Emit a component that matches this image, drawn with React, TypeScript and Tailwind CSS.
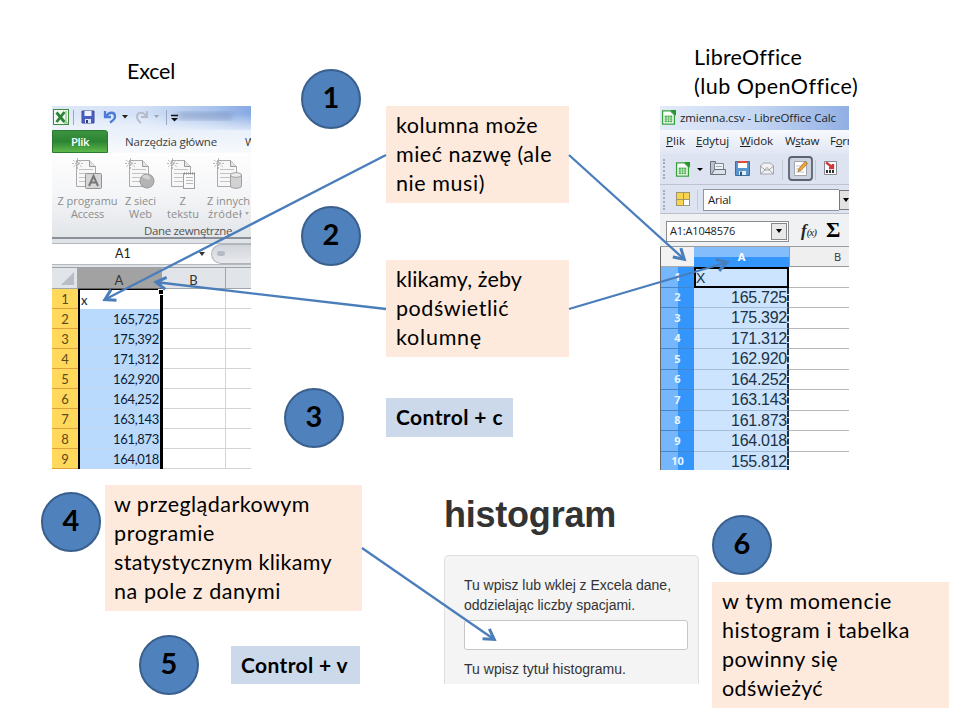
import { useLayoutEffect, useRef, type ReactNode } from "react";

const lato = "font-['Lato','Liberation_Sans',sans-serif]";
const segoe = "font-['Open_Sans','Noto_Sans',sans-serif]";
const arial = "font-['Liberation_Sans',sans-serif]";

/* A single line of text, tracked so that it occupies exactly `w` pixels. */
function Line({ w, className = "", children }: { w: number; className?: string; children: ReactNode }) {
  const ref = useRef<HTMLSpanElement>(null);
  useLayoutEffect(() => {
    const el = ref.current;
    if (!el) return;
    el.style.letterSpacing = "0px";
    const natural = el.getBoundingClientRect().width;
    const count = (el.textContent || "").length;
    if (count > 0) el.style.letterSpacing = `${(w - natural) / count}px`;
  }, [w]);
  return (
    <span className="block w-max">
      <span ref={ref} className={`inline-block whitespace-nowrap ${className}`}>{children}</span>
    </span>
  );
}

function Step({ n, className = "" }: { n: number; className?: string }) {
  return (
    <div className={`flex size-[60px] shrink-0 items-center justify-center rounded-full border-[2.500px] border-[#3a5f8d] bg-[#4f81bd] pb-[5px] text-[29px] leading-none font-bold text-black ${className}`}>
      {n}
    </div>
  );
}

function Note({ lines, className = "" }: { lines: [string, number][]; className?: string }) {
  return (
    <div className={`shrink-0 bg-[#fdeadd] pt-[5px] text-[21.500px] leading-[29px] text-black ${className}`}>
      {lines.map(([t, w]) => (
        <Line key={t} w={w}>{t}</Line>
      ))}
    </div>
  );
}

function Shortcut({ text, w, className = "" }: { text: string; w: number; className?: string }) {
  return (
    <div className={`flex shrink-0 items-center bg-[#cbd9eb] pb-[2px] pl-[10px] text-[21px] leading-[29px] font-bold text-black ${className}`}>
      <Line w={w}>{text}</Line>
    </div>
  );
}

function DocIcon({ kind }: { kind: "access" | "web" | "text" | "other" }) {
  return (
    <svg width="32" height="33" viewBox="0 0 32 33" fill="none" className="shrink-0">
      <path d="M4.500 3.500h13l6 6v20h-19z" fill="#f7f7f7" stroke="#aaa" />
      <path d="M17.500 3.500v6h6" fill="#e4e4e4" stroke="#999" />
      <path d="M7 12.500h14M7 16.500h14M7 20.500h14M7 24.500h14" stroke="#c2c2c2" />
      <path d="M1 3l9 7M10 3l-9 7M5.500 1v11M0 6.500h11" stroke="#b9b9b9" strokeDasharray="2 1" />
      {kind === "access" && (
        <g>
          <rect x="13.500" y="16.500" width="16" height="15" rx="1" fill="#d6d6d6" stroke="#929292" />
          <path d="M17 29l4.500-10 4.500 10M18.500 25.500h6" stroke="#777" strokeWidth="2" />
        </g>
      )}
      {kind === "web" && (
        <g>
          <circle cx="22" cy="24" r="7" fill="#b4b4b4" stroke="#989898" />
          <path d="M17 20c3-4 8-2 8 1s-5 1-8-1z" fill="#d4d4d4" />
        </g>
      )}
      {kind === "text" && (
        <g>
          <rect x="16.500" y="16.500" width="11" height="15" fill="#fafafa" stroke="#a0a0a0" />
          <path d="M17 16.500h11" stroke="#888" strokeWidth="2" strokeDasharray="1 1" />
          <path d="M19 20.500h7M19 23.500h7M19 26.500h7" stroke="#bbb" />
        </g>
      )}
      {kind === "other" && (
        <g>
          <path d="M17.500 18v11c0 3 11 3 11 0V18" fill="#d2d2d2" stroke="#a0a0a0" />
          <ellipse cx="23" cy="18" rx="5.500" ry="2.300" fill="#ececec" stroke="#a0a0a0" />
        </g>
      )}
    </svg>
  );
}

const excelRows: string[] = ["x", "165,725", "175,392", "171,312", "162,920", "164,252", "163,143", "161,873", "164,018"];

function RibbonItem({ kind, a, b, wa, wb, className }: { kind: "access" | "web" | "text" | "other"; a: string; b: string; wa: number; wb: number; className: string }) {
  return (
    <div className={`flex shrink-0 flex-col items-center text-[11px] leading-[13px] text-[#8d8d8d] ${className}`}>
      <DocIcon kind={kind} />
      <div className="mt-[4px] flex flex-col items-center">
        <Line w={wa}>{a}</Line>
        <div className="flex items-center">
          <Line w={wb}>{b}</Line>
          {kind === "other" && <span className="ml-[3px] border-x-[2.5px] border-t-[3px] border-x-transparent border-t-[#aaa]" />}
        </div>
      </div>
    </div>
  );
}

function Excel() {
  return (
    <div className="flex h-[364px] w-[199px] flex-col overflow-hidden bg-white">
      {/* Quick access toolbar */}
      <div className="flex h-[24px] shrink-0 items-center bg-[linear-gradient(90deg,#dfe8f7_0%,#d3e1f7_45%,#a9c3ec_80%,#86a9e4_100%)]">
        <svg width="199" height="24" fill="none">
          <defs>
            <linearGradient id="fade" x1="0" y1="0" x2="0" y2="1">
              <stop offset="0" stopColor="#fff" stopOpacity="0" />
              <stop offset="1" stopColor="#f3f7fd" stopOpacity=".75" />
            </linearGradient>
            <filter id="soft"><feGaussianBlur stdDeviation="3" /></filter>
          </defs>
          <rect y="8" width="199" height="16" fill="url(#fade)" />
          <rect x="126" y="6" width="54" height="8" fill="#6d86ad" opacity=".45" filter="url(#soft)" />
          <rect x="1.500" y="3.500" width="15" height="15" fill="#f4faf2" stroke="#3d8c3c" />
          <path d="M4.500 6.500l8 9.500M12.500 6l-8 10" stroke="#2a8436" strokeWidth="2.800" />
          <path d="M14 5v12M12 17h4" stroke="#7db574" />
          <path d="M21.500 4v15M114.500 4v15" stroke="#9ba9c0" />
          <path d="M30 5h12v12H30z" fill="#4b5fc0" stroke="#3e4c9c" />
          <path d="M32.500 5h7v5h-7z" fill="#eff4ff" />
          <path d="M33 13h6v4h-6z" fill="#dfe5f5" /><path d="M34 14h2v3h-2z" fill="#303c82" />
          <path d="M53 5v6h6M54 10.500c3-5 9-5 9 0 0 3-2 4-5 6" stroke="#4c7cd6" strokeWidth="2.300" />
          <path d="M70 9h6l-3 3.500z" fill="#222" />
          <path d="M95 5v6h-6M94 10c-3-5-9-4-9 1 0 3 2 4 4 6" stroke="#b4bac6" strokeWidth="1.800" />
          <path d="M102 9h5l-2.500 3z" fill="#9ca3b0" />
          <path d="M119 9.500h7" stroke="#111" strokeWidth="1.500" /><path d="M119 12h7l-3.500 3.500z" fill="#111" />
        </svg>
      </div>
      {/* Tabs */}
      <div className={`flex h-[23px] shrink-0 items-center bg-[linear-gradient(180deg,#e9f0fa,#f8fafc)] text-[11.500px] text-[#3d3d3d] ${segoe}`}>
        <div className="flex h-full w-[56px] shrink-0 items-center justify-center rounded-tr-[3px] border border-[#2b7a31] bg-[linear-gradient(180deg,#3d9440_0%,#2b8433_50%,#5fb84a_100%)] font-semibold text-white">
          <Line w={18}>Plik</Line>
        </div>
        <div className="ml-[17px] shrink-0"><Line w={92}>Narzędzia główne</Line></div>
        <div className="ml-[28px] shrink-0">W</div>
      </div>
      {/* Ribbon group */}
      <div className={`flex h-[86px] shrink-0 flex-col border-b-2 border-[#8a8f98] bg-[linear-gradient(180deg,#fefefe_0%,#f4f5f7_50%,#e2e5e9_100%)] ${segoe}`}>
        <div className="flex pt-[4px]">
          <RibbonItem kind="access" a="Z programu" b="Access" wa={60} wb={33} className="ml-[5px] w-[61px]" />
          <RibbonItem kind="web" a="Z sieci" b="Web" wa={31} wb={23} className="ml-[5px] w-[35px]" />
          <RibbonItem kind="text" a="Z" b="tekstu" wa={7} wb={32} className="ml-[8px] w-[34px]" />
          <RibbonItem kind="other" a="Z innych" b="źródeł" wa={43} wb={34} className="ml-[6px] w-[45px]" />
        </div>
        <div className="mt-[3px] ml-[92px] text-[11.500px] leading-[16px] text-[#555]"><Line w={88}>Dane zewnętrzne</Line></div>
      </div>
      {/* Name box */}
      <div className="flex h-[29px] shrink-0 items-center border-b border-[#9ea3aa] bg-[#dfe2e6] pt-px">
        <div className={`flex h-[22px] w-full items-center border-y border-[#b6babf] bg-white text-[12.500px] text-[#222] ${lato}`}>
          <div className="w-[146px] pt-[2px] pl-[63px]"><Line w={16}>A1</Line></div>
          <span className="ml-[1px] border-x-[3.500px] border-t-4 border-x-transparent border-t-[#333]" />
          <div className="ml-[6px] flex h-[20px] flex-1 items-center rounded-l-full border border-r-0 border-[#aeb3ba] bg-[linear-gradient(180deg,#d2d5da,#e8eaed)] pl-[5px]">
            <span className="h-[5px] w-[8px] rounded-full bg-[#b4bbc5]" />
          </div>
        </div>
      </div>
      {/* Column headings */}
      <div className={`flex h-[21px] shrink-0 bg-[#e1e4e9] text-[13px] leading-[24px] text-[#333] ${lato}`}>
        <div className="flex w-[26px] items-end justify-end border-r border-b border-[#9fa5ad] p-[3px]">
          <svg width="13" height="13"><path d="M13 0v13H0z" fill="#b9bec6" /></svg>
        </div>
        <div className="w-[84px] border-b border-[#666] bg-[#a2a2a2] pr-[2px] text-center">A</div>
        <div className="w-[64px] border-r border-b border-[#9fa5ad] text-center">B</div>
        <div className="flex-1 border-b border-[#9fa5ad]" />
      </div>
      {/* Cells */}
      <div className={`flex ${lato}`}>
        <div className="w-[26px] shrink-0 bg-[#ffd85c] text-[13px] text-[#5a4a18]">
          {excelRows.map((_, i) => (
            <div key={i} className="flex h-[20px] items-center justify-center border-b border-[#dfa23a] pt-[2px]">{i + 1}</div>
          ))}
        </div>
        <div className="relative w-[85px] shrink-0 border-t-[1.500px] border-r-[3px] border-l-2 border-black bg-white text-[13px] text-[#0d1a33]">
          {excelRows.map((v, i) =>
            i === 0 ? (
              <div key={v} className="h-[19px] pl-[1px] leading-[20px]">{v}</div>
            ) : (
              <div key={v} className="flex h-[20px] items-center justify-end border-b border-[#bfd6f0] bg-[#b9dafc] pt-[2px] pr-px">
                <Line w={46}>{v}</Line>
              </div>
            ),
          )}
          <span className="absolute -top-[1px] -right-[4px] size-[6px] border border-white bg-black" />
        </div>
        <div className="w-[63px] shrink-0 border-r border-[#d3d3d3]">
          {excelRows.map((v) => <div key={v} className="h-[20px] border-b border-[#d3d3d3]" />)}
        </div>
        <div className="flex-1">
          {excelRows.map((v) => <div key={v} className="h-[20px] border-b border-[#d3d3d3]" />)}
        </div>
      </div>
    </div>
  );
}

function CalcDoc({ size }: { size: number }) {
  return (
    <svg width={size} height={size} viewBox="0 0 16 16" className="shrink-0">
      <path d="M1.700 1h8.600l4 4v10H1.700z" fill="#fff" stroke="#36a13c" strokeWidth="1.400" />
      <path d="M10 0h6v6z" fill="#27932e" />
      <path d="M4 6h8v7H4z" fill="#3da842" />
      <path d="M4 8.500h8M4 10.800h8M6.700 6v7M9.400 6v7" stroke="#dff2df" strokeWidth=".8" />
    </svg>
  );
}

function Grip() {
  return <span className="ml-[3px] h-[20px] shrink-0 border-l-2 border-dotted border-[#a4adbb]" />;
}

const calcRows: string[] = ["X", "165.725", "175.392", "171.312", "162.920", "164.252", "163.143", "161.873", "164.018", "155.812"];

function Calc() {
  return (
    <div className="flex h-[364px] w-[189px] flex-col overflow-hidden bg-white">
      <div className={`flex h-[24px] shrink-0 items-center bg-[linear-gradient(90deg,#e3ebf8_0%,#c6d7f3_50%,#91afe4_100%)] pb-px pl-[1px] text-[11.500px] text-[#1d1d1d] ${segoe}`}>
        <CalcDoc size={15} />
        <div className="ml-[4px] shrink-0"><Line w={156}>zmienna.csv - LibreOffice Calc</Line></div>
      </div>
      <div className={`flex h-[24px] shrink-0 items-center bg-[linear-gradient(180deg,#f7f9fd,#e1e6f3)] pb-[2px] pl-[6px] text-[11.500px] text-[#1d1d1d] ${segoe}`}>
        <div className="w-[30px] shrink-0"><Line w={19}><u>P</u>lik</Line></div>
        <div className="w-[44px] shrink-0"><Line w={33}><u>E</u>dytuj</Line></div>
        <div className="w-[45px] shrink-0"><Line w={33}><u>W</u>idok</Line></div>
        <div className="w-[45px] shrink-0"><Line w={34}>W<u>s</u>taw</Line></div>
        <div className="shrink-0"><Line w={37}>F<u>o</u>rmat</Line></div>
      </div>
      {/* Standard toolbar */}
      <div className="flex h-[31px] shrink-0 items-center border-b border-[#bcc4d2] bg-[#dde3f0]">
        <Grip />
        <span className="ml-[10px] flex"><CalcDoc size={15} /></span>
        <span className="ml-[7px] shrink-0 border-x-[3px] border-t-[3px] border-x-transparent border-t-black" />
        <svg width="142" height="31" fill="none" className="shrink-0">
          <path d="M7.500 7.500h5v13h-5z" fill="#bcc3cb" stroke="#65707e" />
          <path d="M11.500 9.500h9v7h-9z" fill="#eef1f5" stroke="#7d8794" /><path d="M13 12.500h6" stroke="#a3abb5" /><path d="M8.500 20.500l3-5h11v5z" fill="#dde1e7" stroke="#65707e" />
          <path d="M32.500 7.500h14v14h-14z" fill="#5795cf" stroke="#386e9f" />
          <path d="M35 8h9v6h-9z" fill="#fff" /><path d="M34 8h11" stroke="#de4b36" strokeWidth="2" />
          <path d="M36 17h7v4h-7z" fill="#e5edf5" /><path d="M37 17.500h2v4h-2z" fill="#30567b" />
          <path d="M57.500 12l3-3h7l3 3v8h-13z" fill="#f1f1f1" stroke="#a2a6ac" />
          <path d="M57.500 20l4.500-4h4l4.500 4M57.500 12l4.500 4c1-3 3-3 4 0l4.500-4" stroke="#a2a6ac" />
          <path d="M79.500 6v20" stroke="#c3cad6" />
          <rect x="86" y="3" width="23" height="23" rx="3" fill="#cbd3e1" stroke="#5d6470" strokeWidth="1.800" />
          <path d="M91.500 7.500h12v14h-12z" fill="#fff" stroke="#a2a6ac" />
          <path d="M93 12h6M93 15h4M93 18h8" stroke="#c2c6cc" />
          <path d="M96 14.500l6-7 2.500 2-6.500 7-3 1z" fill="#f0a534" stroke="#986123" strokeWidth=".7" />
          <path d="M112.500 6v20" stroke="#c3cad6" />
          <path d="M121.500 7.500h12v13h-12z" fill="#fff" stroke="#85898f" />
          <path d="M123 8.500l7 5M130 10v4h-4" stroke="#ce3838" strokeWidth="2.300" />
          <path d="M123 17.500h9" stroke="#333" strokeWidth="3" strokeDasharray="2 1" />
        </svg>
      </div>
      {/* Formatting toolbar */}
      <div className="flex h-[29px] shrink-0 items-center border-b border-[#bcbfc5] bg-[#dde3f0] pt-px">
        <Grip />
        <svg width="35" height="24" fill="none" className="ml-px shrink-0">
          <rect x="10.500" y="4.500" width="13" height="13" fill="#fff" stroke="#9e966d" />
          <path d="M11 5h6v6h-6zM18 5h5v6h-5zM11 12h6v5h-6z" fill="#f8d34e" /><path d="M17.500 5v13M11 11.500h13" stroke="#9e966d" />
          <path d="M31.500 2v20" stroke="#c3cad6" />
        </svg>
        <div className={`ml-[2px] flex h-[22px] flex-1 items-center border border-r-0 border-[#8f96a3] bg-white pl-[4px] text-[11.500px] text-[#222] ${segoe}`}>
          <Line w={23}>Arial</Line>
        </div>
        <span className="flex h-[20px] w-[10px] shrink-0 items-center justify-end border border-r-0 border-[#777] bg-[#e3e3e3]">
          <span className="border-x-[3.500px] border-t-4 border-x-transparent border-t-black" />
        </span>
      </div>
      {/* Formula bar */}
      <div className={`flex h-[33px] shrink-0 items-center border-b border-[#9b9b9b] bg-[#f0f1f3] pt-[2px] pl-[6px] text-[11px] text-[#222] ${segoe}`}>
        <div className="flex h-[21px] w-[123px] shrink-0 items-center justify-between border border-[#8c8c8c] bg-white pr-px pl-[3px]">
          <Line w={65}>A1:A1048576</Line>
          <span className="flex h-[17px] w-[16px] items-center justify-center border border-[#888] bg-[#e9e9e9]">
            <span className="border-x-[3.500px] border-t-[4px] border-x-transparent border-t-black" />
          </span>
        </div>
        <div className="ml-[12px] flex w-[17px] items-baseline pb-[2px] font-['Liberation_Serif',serif] italic">
          <span className="text-[17px] leading-none font-bold">f</span>
          <span className="text-[11px] leading-none tracking-[-1px]">(x)</span>
        </div>
        <div className="ml-[8px] pb-[2px] font-['Liberation_Serif',serif] text-[22px] leading-none font-bold text-black">Σ</div>
      </div>
      {/* Column headings */}
      <div className={`flex h-[20px] shrink-0 border-l border-[#666] text-[11px] leading-[20px] text-[#333] ${segoe}`}>
        <div className="w-[33px] border-b border-[#aaa] bg-[#f2f2f2]" />
        <div className="w-[95px] bg-[linear-gradient(180deg,#83bdfc_50%,#3496fb_50%)] text-center font-bold text-white">A</div>
        <div className="flex-1 border-b border-l border-[#999] bg-[#efefef] pl-[44px]">B</div>
      </div>
      <div className="flex border-l border-[#666]">
        <div className={`w-[33px] shrink-0 bg-[linear-gradient(90deg,#76b6fb_50%,#3496fb_50%)] text-[11px] font-bold text-[#e9f5ff] ${segoe}`}>
          {calcRows.map((v, i) => (
            <div key={v} className="flex h-[20.500px] items-center justify-center border-b border-[#4586ca]">{i + 1}</div>
          ))}
        </div>
        <div className={`w-[95px] shrink-0 bg-[#cce4fd] text-[16px] text-[#203246] ${arial}`}>
          {calcRows.map((v, i) =>
            i === 0 ? (
              <div key={v} className="flex h-[20.500px] items-center border-2 border-black pt-[2px] text-[14px]">{v}</div>
            ) : (
              <div key={v} className="flex h-[20.500px] items-center justify-end border-r-2 border-b border-r-[#233044] border-b-[#a5bdd6] pt-px [border-right-style:dashed]">
                <Line w={56}>{v}</Line>
              </div>
            ),
          )}
        </div>
        <div className="flex-1">
          {calcRows.map((v) => <div key={v} className="h-[20.500px] border-b border-[#b7b7b7]" />)}
        </div>
      </div>
    </div>
  );
}

const arrows: [number, number, number, number][] = [
  [386, 155, 104, 300],
  [386, 309, 155, 282],
  [569, 155, 685, 260],
  [569, 309, 728, 262],
  [362, 548, 495, 640],
];

function Arrows() {
  return (
    <svg width="960" height="720" className="pointer-events-none absolute inset-0" fill="none" stroke="#4a7ebb" strokeWidth="2.300">
      {arrows.map(([x1, y1, x2, y2]) => {
        const angle = (Math.atan2(y2 - y1, x2 - x1) * 180) / Math.PI;
        return (
          <g key={`${x1}-${y1}-${x2}`}>
            <path d={`M${x1} ${y1}L${x2} ${y2}`} />
            <path d="M-11 -6L-1 0L-11 6" strokeWidth="3" transform={`translate(${x2} ${y2}) rotate(${angle})`} />
          </g>
        );
      })}
    </svg>
  );
}

export default function App() {
  return (
    <main className={`relative flex h-[720px] w-[960px] flex-col overflow-hidden bg-white ${lato}`}>
      <section className="flex h-[470px] shrink-0 items-start">
        <div className="ml-[52px] flex w-[199px] shrink-0 flex-col">
          <div className="flex h-[106px] pt-[57px] pl-[75px] text-[21.500px] leading-[29px]"><Line w={48}>Excel</Line></div>
          <Excel />
        </div>
        <div className="ml-[33px] flex w-[78px] shrink-0 flex-col pt-[69px]">
          <Step n={1} className="ml-[17px]" />
          <Step n={2} className="mt-[77px] ml-[17px]" />
          <Step n={3} className="mt-[122px]" />
        </div>
        <div className="ml-[24px] flex w-[183px] shrink-0 flex-col pt-[106px]">
          <Note className="h-[97px] pl-[10px]" lines={[["kolumna może", 142], ["mieć nazwę (ale", 156], ["nie musi)", 89]]} />
          <Note className="mt-[57px] h-[97px] pl-[10px]" lines={[["klikamy, żeby", 126], ["podświetlić", 113], ["kolumnę", 86]]} />
          <Shortcut className="mt-[41px] h-[39px] w-[127px]" text="Control + c" w={107} />
        </div>
        <div className="ml-[91px] flex w-[200px] shrink-0 flex-col">
          <div className="h-[106px] pt-[43px] pl-[34px] text-[21.500px] leading-[29px]">
            <Line w={107}>LibreOffice</Line>
            <Line w={163}>(lub OpenOffice)</Line>
          </div>
          <Calc />
        </div>
      </section>
      <section className="flex h-[250px] shrink-0 items-start">
        <div className="ml-[41px] flex w-[321px] shrink-0 flex-col pt-[15px]">
          <div className="flex">
            <Step n={4} className="mt-[7px]" />
            <Note className="ml-[4px] h-[126px] w-[257px] pl-[9px]" lines={[["w przeglądarkowym", 196], ["programie", 101], ["statystycznym klikamy", 218], ["na pole z danymi", 167]]} />
          </div>
          <div className="mt-[24px] ml-[98px] flex items-start">
            <Step n={5} />
            <Shortcut className="mt-[11px] ml-[32px] h-[38px] w-[129px]" text="Control + v" w={107} />
          </div>
        </div>
        <div className={`ml-[82px] flex w-[255px] shrink-0 flex-col text-[#333] ${arial}`}>
          <h1 className="h-[85px] pt-[23px] text-[36px] leading-[44px] font-bold"><Line w={172}>histogram</Line></h1>
          <div className="flex h-[129px] flex-col rounded-t-[5px] border border-b-0 border-[#dfdfdf] bg-[#f4f4f4] px-[19px] pt-[19px] text-[14px] leading-[20px]">
            <Line w={207}>Tu wpisz lub wklej z Excela dane,</Line>
            <Line w={171}>oddzielając liczby spacjami.</Line>
            <div className="mt-[5px] h-[30px] w-[224px] shrink-0 rounded-[3px] border border-[#c6c6c6] bg-white" />
            <div className="mt-[9px]"><Line w={162}>Tu wpisz tytuł histogramu.</Line></div>
          </div>
        </div>
        <div className="ml-[13px] flex w-[237px] shrink-0 flex-col pt-[45px]">
          <Step n={6} />
          <Note className="mt-[7px] h-[126px] pl-[10px]" lines={[["w tym momencie", 170], ["histogram i tabelka", 188], ["powinny się", 116], ["odświeżyć", 101]]} />
        </div>
      </section>
      <Arrows />
    </main>
  );
}
